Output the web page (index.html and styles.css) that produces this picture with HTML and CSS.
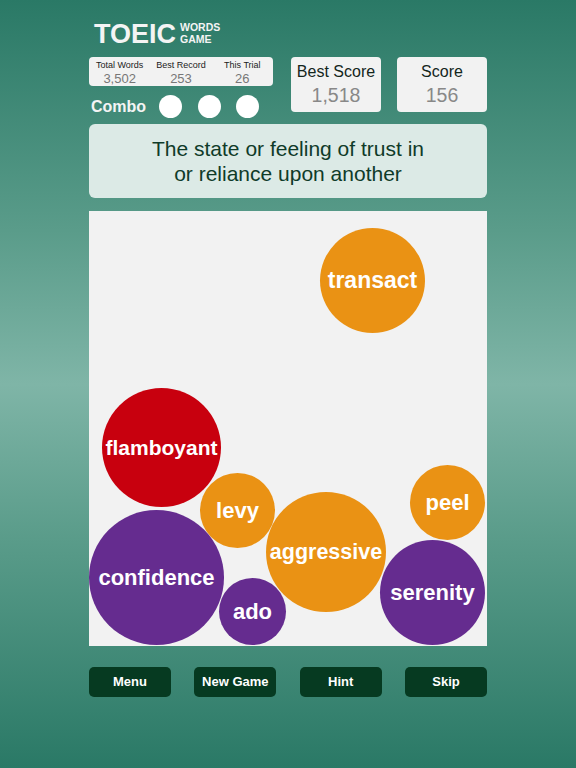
FILE: index.html
```html
<!DOCTYPE html>
<html lang="en">
<head>
<meta charset="utf-8">
<title>TOEIC Words Game</title>
<link rel="stylesheet" href="styles.css">
</head>
<body>
<div class="page">
  <header class="header">
    <div class="left">
      <div class="title">
        <span class="toeic">TOEIC</span>
        <span class="sub">WORDS<br>GAME</span>
      </div>
      <div class="stats">
        <div class="stat"><div class="stat-label">Total Words</div><div class="stat-value">3,502</div></div>
        <div class="stat"><div class="stat-label">Best Record</div><div class="stat-value">253</div></div>
        <div class="stat"><div class="stat-label">This Trial</div><div class="stat-value">26</div></div>
      </div>
      <div class="combo">
        <span class="combo-label">Combo</span>
        <div class="dots">
          <span class="dot"></span>
          <span class="dot"></span>
          <span class="dot"></span>
        </div>
      </div>
    </div>
    <div class="scores">
      <div class="score-box"><div class="score-label">Best Score</div><div class="score-value">1,518</div></div>
      <div class="score-box"><div class="score-label">Score</div><div class="score-value">156</div></div>
    </div>
  </header>

  <div class="definition">The state or feeling of trust in<br>or reliance upon another</div>

  <div class="board">
    <div class="bubble orange b-transact">transact</div>
    <div class="bubble red b-flamboyant">flamboyant</div>
    <div class="bubble orange b-levy">levy</div>
    <div class="bubble purple b-confidence">confidence</div>
    <div class="bubble purple b-ado">ado</div>
    <div class="bubble orange b-aggressive">aggressive</div>
    <div class="bubble orange b-peel">peel</div>
    <div class="bubble purple b-serenity">serenity</div>
  </div>

  <div class="buttons">
    <div class="btn">Menu</div>
    <div class="btn">New Game</div>
    <div class="btn">Hint</div>
    <div class="btn">Skip</div>
  </div>
</div>
</body>
</html>
```

FILE: styles.css
```css
html, body {
  margin: 0;
  padding: 0;
}
body {
  width: 576px;
  height: 768px;
  overflow: hidden;
  background: linear-gradient(to bottom, #2a7966 0%, #5a9c8a 30%, #7fb5a7 50%, #5a9c8a 70%, #2a7966 100%);
  font-family: "Liberation Sans", Arial, sans-serif;
}
.page {
  width: 398px;
  margin-left: 89px;
  padding-top: 21px;
}
.header {
  display: flex;
  justify-content: space-between;
  align-items: flex-start;
}
.left {
  width: 184px;
}
.title {
  display: flex;
  align-items: flex-start;
  height: 26px;
  color: #f4f4f4;
  font-weight: bold;
  padding-left: 5px;
}
.toeic {
  font-size: 27px;
  line-height: 26px;
}
.sub {
  margin-left: 4px;
  font-size: 10.5px;
  line-height: 12px;
}
.stats {
  margin-top: 10px;
  height: 29px;
  box-sizing: border-box;
  padding-top: 3px;
  background: #f2f2f2;
  border-radius: 4px;
  display: grid;
  grid-template-columns: 1fr 1fr 1fr;
  text-align: center;
}
.stat-label {
  font-size: 9px;
  line-height: 10px;
  color: #222;
}
.stat-value {
  margin-top: 2px;
  font-size: 13px;
  line-height: 13px;
  color: #777;
}
.combo {
  margin-top: 9px;
  height: 23px;
  display: flex;
  align-items: center;
  padding-left: 2px;
}
.combo-label {
  color: #f4f4f4;
  font-weight: bold;
  font-size: 16px;
}
.dots {
  display: flex;
  gap: 15.5px;
  margin-left: 13px;
}
.dot {
  width: 23px;
  height: 23px;
  border-radius: 50%;
  background: #fff;
}
.scores {
  display: flex;
  gap: 16px;
  margin-top: 36px;
}
.score-box {
  width: 90px;
  height: 55px;
  box-sizing: border-box;
  padding-top: 5.5px;
  background: #f2f2f2;
  border-radius: 4px;
  text-align: center;
}
.score-label {
  font-size: 16px;
  line-height: 18px;
  color: #14261c;
}
.score-value {
  margin-top: 3.75px;
  font-size: 19.5px;
  line-height: 22px;
  color: #888;
}
.definition {
  margin-top: 6px;
  height: 74px;
  box-sizing: border-box;
  padding-top: 12px;
  background: #dceae6;
  border-radius: 6px;
  text-align: center;
  font-size: 21px;
  line-height: 25px;
  color: #0f3b29;
}
.board {
  position: relative;
  margin-top: 13px;
  height: 435px;
  background: #f2f2f2;
  overflow: hidden;
}
.bubble {
  position: absolute;
  border-radius: 50%;
  display: flex;
  align-items: center;
  justify-content: center;
  color: #fff;
  font-weight: bold;
  font-size: 22px;
}
.orange { background: #ea9214; }
.red { background: #c8000e; }
.purple { background: #652c8f; }
.b-transact { left: 231px; top: 17px; width: 105px; height: 105px; font-size: 23px; }
.b-flamboyant { left: 13px; top: 177px; width: 119px; height: 119px; font-size: 21px; }
.b-levy { left: 111px; top: 262px; width: 75px; height: 75px; }
.b-confidence { left: 0; top: 299px; width: 135px; height: 135px; }
.b-ado { left: 130px; top: 367px; width: 67px; height: 67px; }
.b-aggressive { left: 177px; top: 281px; width: 120px; height: 120px; font-size: 21.5px; }
.b-peel { left: 321px; top: 254px; width: 75px; height: 75px; }
.b-serenity { left: 291px; top: 329px; width: 105px; height: 105px; }
.buttons {
  margin-top: 21px;
  display: flex;
  justify-content: space-between;
}
.btn {
  width: 82px;
  height: 30px;
  border-radius: 5px;
  background: #063a21;
  color: #fff;
  font-weight: bold;
  font-size: 13px;
  line-height: 30px;
  text-align: center;
}
```
